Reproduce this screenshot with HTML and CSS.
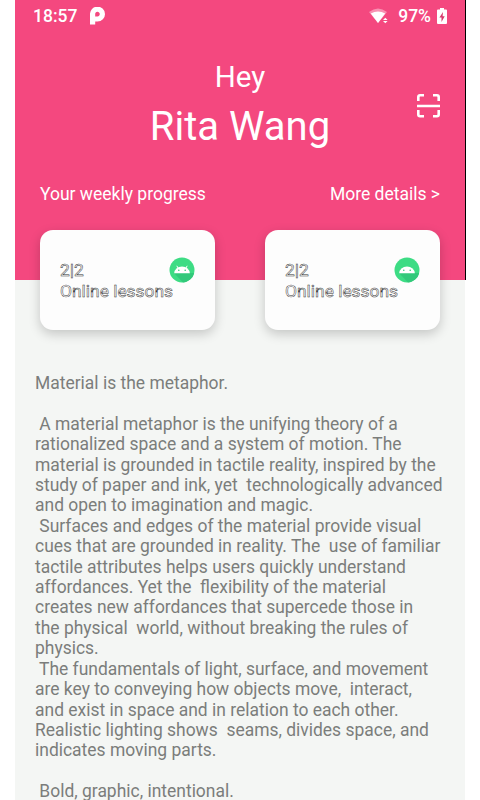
FILE: index.html
```html
<!DOCTYPE html>
<html lang="en">
<head>
<meta charset="utf-8">
<title>Weekly progress</title>
<link rel="stylesheet" href="styles.css">
</head>
<body>
<main class="screen">
  <section class="hero">
    <div class="status">
      <span class="time">18:57</span>
      <svg class="app-mark" viewBox="0 0 15 18" width="15" height="18"><path d="M2.6 17.5V7.5A4.9 4.9 0 1 1 7.5 12H4" fill="none" stroke="#fff" stroke-width="5.2"/></svg>
      <svg class="wifi" viewBox="0 0 20 16" width="20" height="16"><path d="M0 4Q9-3 18 4L9 15Z" fill="#fff" opacity=".4"/><path d="M1.8 5.600Q9 1.600 16.200 5.600L9 15Z" fill="#fff"/><path d="M14 12l2.300-2.300L18.600 12zM14 13h4.600l-2.300 2.300z" fill="#fff"/></svg>
      <span class="percent">97%</span>
      <svg class="battery" viewBox="0 0 10 16" width="10" height="16"><path d="M3 0h4v1.500h2a1 1 0 0 1 1 1v12.500a1 1 0 0 1-1 1H1a1 1 0 0 1-1-1V2.500a1 1 0 0 1 1-1h2z" fill="#fff"/><path d="M6 4L2.400 9.500H4.500V14L7.700 8.300H5.600z" fill="#d73a6c"/></svg>
    </div>
    <header class="greeting">
      <p class="hey">Hey</p>
      <h1 class="name">Rita Wang</h1>
      <svg class="scan" viewBox="0 0 23 24" width="23" height="24"><path d="M1.3 7V3Q1.3 1.3 3 1.3H7M16 1.3H20Q21.700 1.3 21.700 3V7M1.3 16V20.500Q1.3 22.200 3 22.200H7M16 22.200H20Q21.700 22.200 21.700 20.500V16M0 12H23" fill="none" stroke="#fff" stroke-width="2.600"/></svg>
    </header>
    <div class="progress"><span>Your weekly progress</span><span>More details &gt;</span></div>
  </section>
  <section class="cards">
    <article class="card">
      <div class="lesson"><p>2|2</p><p>Online lessons</p></div>
      <svg class="robot" viewBox="0 0 26 26" width="26" height="26"><circle cx="13" cy="13" r="12.500" fill="#3ddc84"/><path d="M5 16L14 25.500A12.500 12.500 0 0 0 25.200 16z" fill="#32c97a"/><path d="M9 11L7.800 8.800M17 11L18.200 8.800" fill="none" stroke="#fff"/><path d="M5.200 16.200A7.800 6.800 0 0 1 20.800 16.200z" fill="#fff"/><circle cx="9.800" cy="13.300" r=".8" fill="#32c97a"/><circle cx="16.200" cy="13.300" r=".8" fill="#32c97a"/></svg>
    </article>
    <article class="card">
      <div class="lesson"><p>2|2</p><p>Online lessons</p></div>
      <svg class="robot" viewBox="0 0 26 26" width="26" height="26"><circle cx="13" cy="13" r="12.500" fill="#3ddc84"/><path d="M5 16L14 25.500A12.500 12.500 0 0 0 25.200 16z" fill="#32c97a"/><path d="M5.200 16.200A7.800 6.800 0 0 1 20.800 16.200z" fill="#fff"/><circle cx="9.800" cy="13.300" r=".8" fill="#32c97a"/><circle cx="16.200" cy="13.300" r=".8" fill="#32c97a"/></svg>
    </article>
  </section>
  <article class="copy">Material is the metaphor.

 A material metaphor is the unifying theory of a
rationalized space and a system of motion. The
material is grounded in tactile reality, inspired by the
study of paper and ink, yet  technologically advanced
and open to imagination and magic.
 Surfaces and edges of the material provide visual
cues that are grounded in reality. The  use of familiar
tactile attributes helps users quickly understand
affordances. Yet the  flexibility of the material
creates new affordances that supercede those in
the physical  world, without breaking the rules of
physics.
 The fundamentals of light, surface, and movement
are key to conveying how objects move,  interact,
and exist in space and in relation to each other.
Realistic lighting shows  seams, divides space, and
indicates moving parts.

 Bold, graphic, intentional.</article>
</main>
</body>
</html>
```
FILE: styles.css
```css
* { box-sizing: border-box; }
body { margin: 0; background: #fff; font-family: Roboto, sans-serif; overflow: hidden; }
p, h1 { margin: 0; font-weight: 400; }
svg { display: block; flex: none; }
.screen { width: 450px; height: 800px; margin-left: 15px; background: #f4f6f4; }
.hero { width: 451px; height: 280px; background: #f4487f; border-right: 1px solid #000; color: #fff; }
.status { height: 31px; display: flex; align-items: center; padding: 0 18px; font-size: 17.5px; font-weight: 500; }
.time { width: 43.5px; }
.app-mark { margin-left: 13px; }
.wifi { margin-left: auto; }
.percent { margin: 0 6px 0 9.5px; }
.greeting { position: relative; text-align: center; height: 149px; padding-top: 29px; }
.hey { font-size: 29.5px; line-height: 35px; }
.name { font-size: 40px; line-height: 48px; margin-top: 8px; }
.scan { position: absolute; right: 25px; top: 62.5px; }
.progress { display: flex; justify-content: space-between; padding: 4px 25px 0; font-size: 17.5px; line-height: 20px; }
.cards { display: flex; justify-content: space-between; padding: 0 25px; margin-top: -50px; position: relative; }
.card { width: 175px; height: 100px; border-radius: 13px; background: #fdfdfd; box-shadow: 0 4px 12px rgba(0,0,0,.2); padding: 30px 20px; display: flex; }
.lesson { width: 109px; font-size: 17.4px; line-height: 20.5px; white-space: nowrap; color: #fdfdfd; -webkit-text-stroke: .5px #333; }
.robot { margin-top: -3px; }
.copy { margin: 43px 0 0; padding-left: 20px; font-size: 17.47px; line-height: 20.4px; color: #7b7d7b; white-space: pre; }
```
